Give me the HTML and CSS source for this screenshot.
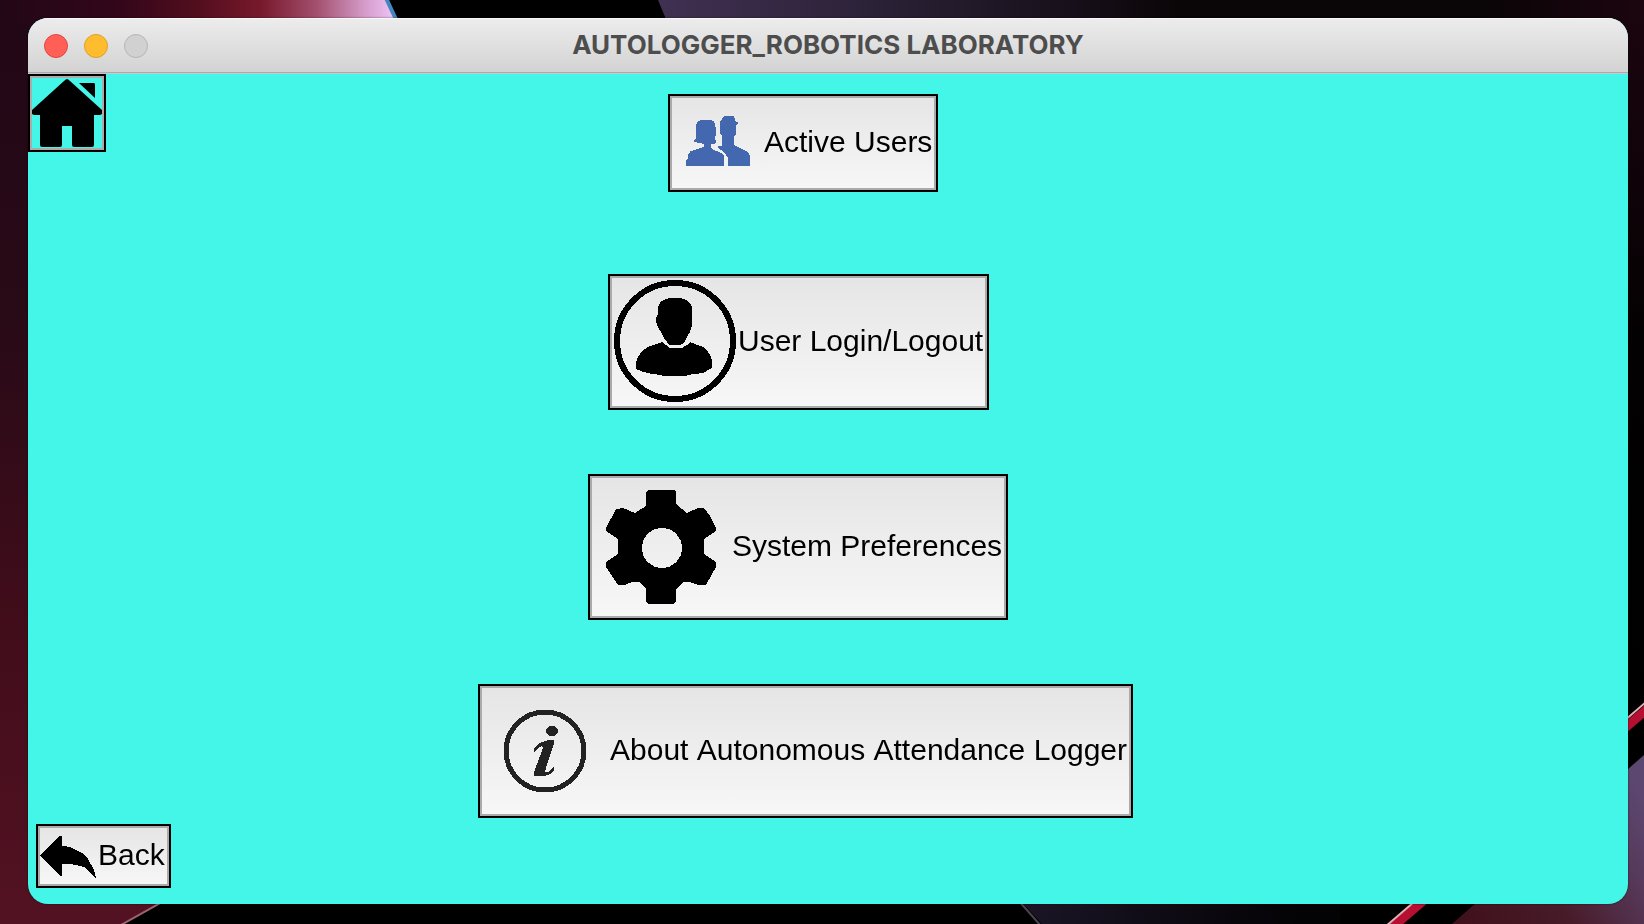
FILE: index.html
```html
<!DOCTYPE html>
<html lang="en">
<head>
<meta charset="utf-8">
<title>AUTOLOGGER_ROBOTICS LABORATORY</title>
<link rel="stylesheet" href="styles.css">
</head>
<body>
<svg class="wallpaper" viewBox="0 0 1644 924" preserveAspectRatio="none" aria-hidden="true">
  <defs>
    <linearGradient id="side" x1="0" y1="0" x2="0" y2="1">
      <stop offset="0" stop-color="#220716"/><stop offset=".35" stop-color="#290a17"/><stop offset=".7" stop-color="#430d1b"/><stop offset="1" stop-color="#531222"/>
    </linearGradient>
    <linearGradient id="glow" gradientUnits="userSpaceOnUse" x1="0" y1="0" x2="396" y2="0">
      <stop offset="0" stop-color="#220716"/><stop offset=".3" stop-color="#33061a"/><stop offset=".5" stop-color="#520e1d"/><stop offset=".66" stop-color="#78192c"/><stop offset=".8" stop-color="#a3506e"/><stop offset=".92" stop-color="#d49bc8"/><stop offset="1" stop-color="#efc6fb"/>
    </linearGradient>
    <linearGradient id="violet" gradientUnits="userSpaceOnUse" x1="660" y1="0" x2="1180" y2="0">
      <stop offset="0" stop-color="#403052"/><stop offset=".4" stop-color="#2c2238"/><stop offset=".8" stop-color="#170f19"/><stop offset="1" stop-color="#0a0507"/>
    </linearGradient>
    <linearGradient id="ceiling" gradientUnits="userSpaceOnUse" x1="1240" y1="0" x2="1644" y2="0">
      <stop offset="0" stop-color="#0a0507"/><stop offset=".6" stop-color="#0a0507"/><stop offset="1" stop-color="#1c050f"/>
    </linearGradient>
    <linearGradient id="night" x1="0" y1="0" x2="0" y2="1">
      <stop offset="0" stop-color="#1c050f"/><stop offset=".5" stop-color="#030102"/><stop offset="1" stop-color="#000"/>
    </linearGradient>
    <linearGradient id="floor" gradientUnits="userSpaceOnUse" x1="1022" y1="0" x2="1300" y2="0">
      <stop offset="0" stop-color="#1b1526"/><stop offset="1" stop-color="#030204"/>
    </linearGradient>
    <linearGradient id="corner" gradientUnits="userSpaceOnUse" x1="1450" y1="924" x2="1644" y2="800">
      <stop offset="0" stop-color="#3f101a"/><stop offset=".45" stop-color="#481b29"/><stop offset=".8" stop-color="#573a5c"/><stop offset="1" stop-color="#5c4770"/>
    </linearGradient>
  </defs>
  <path fill="#000" d="M0 0H1644V924H0Z"/>
  <path fill="url(#side)" d="M0 0H40V880H205L123 924H0Z"/>
  <path fill="url(#glow)" d="M0 0H386L398 24H0Z"/>
  <path stroke="#4487bd" stroke-width="4" d="M386 -2L400 28"/>
  <path fill="url(#violet)" d="M658 0H1300V24H668Z"/>
  <path fill="url(#night)" d="M1620 0H1644V700H1620Z"/>
  <path fill="url(#ceiling)" d="M1240 0H1644V24H1240Z"/>
  <path stroke="#9b6472" stroke-width="2" d="M205 878L121 925"/>
  <path fill="url(#floor)" d="M1018 898H1340V924H1042Z"/>
  <path stroke="#4c454f" stroke-width="2" d="M1018 900L1041 926"/>
  <path stroke="#b60f31" stroke-width="9" d="M1380 938L1660 698"/>
  <path stroke="#e2b0b7" stroke-width="2" d="M1378 933L1660 690"/>
  <path fill="url(#corner)" d="M1452 924L1644 755V924Z"/>
</svg>

<div class="window">
  <header class="titlebar">
    <div class="lights">
      <button class="light light-close" aria-label="Close"></button>
      <button class="light light-minimize" aria-label="Minimize"></button>
      <button class="light light-zoom" aria-label="Zoom" disabled></button>
    </div>
    <h1 class="title">AUTOLOGGER_ROBOTICS LABORATORY</h1>
  </header>

  <main class="content">
    <button class="home" aria-label="Home">
      <svg class="home-icon" viewBox="0 0 70 70" aria-hidden="true">
        <path d="M35 1Q34 1 32 3L0 32V36L2 37H8V67Q8 69 10 69H28Q30 69 30 67V48H40V67Q40 69 42 69H60Q62 69 62 67V37H68L70 36V32L38 3Q36 1 35 1ZM47 5H62Q63 5 63 7V20Z"/>
      </svg>
    </button>

    <button class="action users">
      <svg class="icon" width="92" height="90" viewBox="0 0 92 90" aria-hidden="true">
        <path fill="#4468b0" d="M14 68V62L16 60V56Q18 53 22 52L32 49V46L22 44V42Q24 42 24 38V28Q25 22 31 22H38Q42 22 43 26L44 31V36L43 40L44 44L42 46H39V50Q40 52 44 53Q50 54 52 58V68ZM56 68V60L52 54L46 50V48H50V38L48 36V24L52 18H62L64 24L66 24V26L64 27V36L62 38V47L68 50L76 54L78 58V68Z"/>
      </svg>
      <span class="label">Active Users</span>
    </button>

    <button class="action login">
      <svg class="icon" width="126" height="128" viewBox="0 0 126 128" aria-hidden="true">
        <circle cx="63" cy="63" r="58" fill="none" stroke="#000" stroke-width="6"/>
        <path d="M54 21L58 20H68L72 21Q80 24 80 32V48L78 54L75 59Q73 65 68 67H58Q53 63 50 56L46 49L44 44V40L46 36V30Q47 23 54 21Z"/>
        <path d="M50 64L54 67L58 70H70L75 67L78 64L91 69Q100 76 100 84V90L91 95L75 97V98H50V97Q34 96 24 91V84Q27 74 36 69Z"/>
      </svg>
      <span class="label">User Login/Logout</span>
    </button>

    <button class="action preferences">
      <svg class="icon" width="140" height="138" viewBox="0 0 140 138" aria-hidden="true">
        <path fill-rule="evenodd" d="M56 12H82L84 14V26L95 35L106 30H112L118 38L124 50V53L112 61V76L124 84V89L114 107H106L98 104H91L84 111V123L82 126H56L54 123V111L47 104H40L33 107H26L20 98L14 89V84L26 76V61L14 53V50L24 31L31 30L43 35L54 28V14ZM70 50A20 20 0 1 0 70 90A20 20 0 1 0 70 50Z"/>
      </svg>
      <span class="label">System Preferences</span>
    </button>

    <button class="action about">
      <svg class="icon" width="128" height="126" viewBox="0 0 128 126" aria-hidden="true">
        <circle cx="63" cy="63" r="39" fill="none" stroke="#222" stroke-width="5"/>
        <ellipse cx="70" cy="43" rx="6" ry="5" fill="#222"/>
        <path fill="#222" d="M72 52H66L58 55L52 60V64L56 60L60 58L61 60L52 84V88H63L68 86L72 82V78L66 84H63L64 80L72 56Z"/>
      </svg>
      <span class="label">About Autonomous Attendance Logger</span>
    </button>

    <button class="action back">
      <svg class="icon" width="58" height="56" viewBox="0 0 58 56" aria-hidden="true">
        <path d="M0 27L20 8H22V18Q30 18 36 22Q44 25 48 31L54 42L56 50L50 45Q47 39 40 38Q34 36 22 36V48H20Z"/>
      </svg>
      <span class="label">Back</span>
    </button>
  </main>
</div>
</body>
</html>
```
FILE: styles.css
```css
* {
  box-sizing: border-box;
}

body {
  margin: 0;
  min-height: 100vh;
  display: flex;
  padding: 18px 16px 20px 28px;
  background: #000;
  font-family: "Liberation Sans", Arial, sans-serif;
}

.wallpaper {
  position: fixed;
  top: 0;
  left: 0;
  width: 100%;
  height: 100%;
  z-index: -1;
}

.window {
  flex: 1;
  display: flex;
  flex-direction: column;
  border-radius: 20px;
  overflow: hidden;
  background: #43f6e7;
  box-shadow: 0 0 2px rgba(0, 0, 0, 0.6);
}

.titlebar {
  display: grid;
  grid-template-columns: 1fr auto 1fr;
  align-items: center;
  height: 56px;
  padding: 0 16px;
  background: linear-gradient(#ededed, #d2d2d2);
  border-bottom: 1px solid #c9c9c9;
  box-shadow: inset 0 1px 0 #f8f8f8, inset 0 -1px 0 #aaa;
}

.lights {
  display: flex;
  gap: 16px;
}

.light {
  width: 24px;
  height: 24px;
  padding: 0;
  border: 1px solid;
  border-radius: 50%;
}

.light-close {
  background: #ff5f57;
  border-color: #e2463f;
}

.light-minimize {
  background: #febc2e;
  border-color: #dfa023;
}

.light-zoom {
  background: #d1d1d1;
  border-color: #b5b5b5;
}

.title {
  margin: 0;
  padding-bottom: 2px;
  font-family: Inter, sans-serif;
  font-size: 26px;
  font-weight: 700;
  font-optical-sizing: none;
  line-height: 32px;
  color: #4d4d4d;
}

.content {
  flex: 1;
  display: grid;
  grid-template-rows: auto auto auto auto 1fr;
  justify-items: start;
  align-items: start;
}

.home {
  grid-area: 1 / 1;
  padding: 2px;
  border: 2px solid #000;
  background: #43f6e7;
  box-shadow: inset 0 0 0 2px #ababab;
}

.home-icon {
  display: block;
  width: 70px;
  height: 70px;
}

.action {
  display: flex;
  align-items: center;
  grid-column: 1;
  padding: 2px 4px 2px 2px;
  border: 2px solid #000;
  background: linear-gradient(#e5e5e5, #f7f7f7);
  box-shadow: inset 0 0 0 2px #ababab;
  color: #000;
  font: 30px "Liberation Sans", Arial, sans-serif;
  font-kerning: none;
  white-space: nowrap;
}

.icon {
  flex: none;
  shape-rendering: crispEdges;
}

.label {
  padding-bottom: 2px;
}

.users {
  grid-row: 1;
  margin: 20px 0 82px 40%;
}

.login {
  grid-row: 2;
  margin: 0 0 64px 36.25%;
}

.preferences {
  grid-row: 3;
  margin: 0 0 64px 35%;
}

.about {
  grid-row: 4;
  margin: 0 0 6px 28.125%;
}

.back {
  grid-row: 5;
  align-self: end;
  margin: 0 0 16px 8px;
}
```
